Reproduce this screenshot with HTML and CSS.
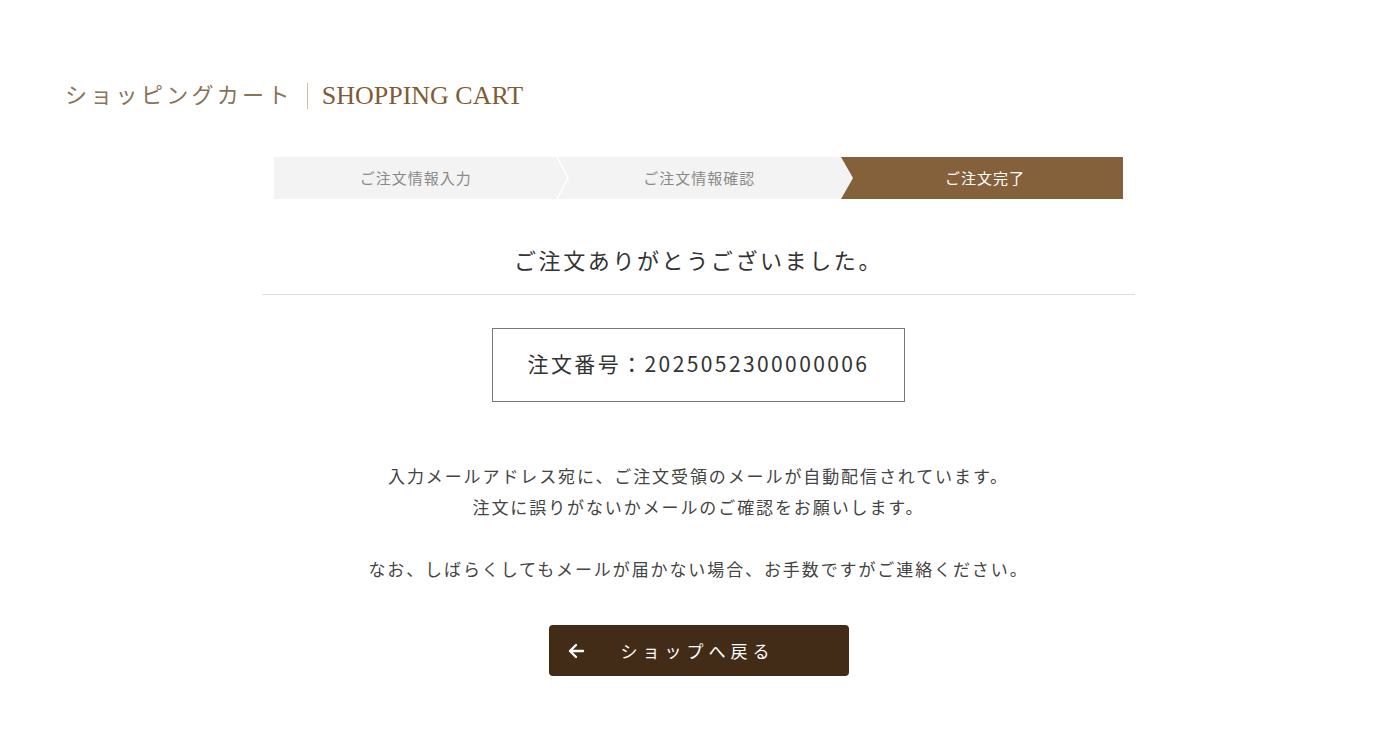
FILE: index.html
```html
<!DOCTYPE html>
<html lang="ja">
<head>
    <meta charset="utf-8">
    <meta name="viewport" content="width=device-width, initial-scale=1">
    <title>ショッピングカート | SHOPPING CART</title>
    <link rel="stylesheet" href="styles.css">
</head>
<body>
    <header class="page-head">
        <h1 class="page-title">
            <span class="title-ja">ショッピングカート</span>
            <span class="title-sep"></span>
            <span class="title-en">SHOPPING CART</span>
        </h1>
    </header>

    <main class="cart">
        <ol class="steps">
            <li class="step">
                ご注文情報入力
                <svg class="step-sep" width="14" height="42" viewBox="0 0 14 42">
                    <polyline points="1,0 12,21 1,42" fill="none" stroke="#fff" stroke-width="1.5"/>
                </svg>
            </li>
            <li class="step">ご注文情報確認</li>
            <li class="step current">ご注文完了</li>
        </ol>

        <h2 class="thanks">ご注文ありがとうございました。</h2>

        <div class="order-no">注文番号：2025052300000006</div>

        <p class="notice">
            入力メールアドレス宛に、ご注文受領のメールが自動配信されています。<br>
            注文に誤りがないかメールのご確認をお願いします。<br>
            <br>
            なお、しばらくしてもメールが届かない場合、お手数ですがご連絡ください。
        </p>

        <a class="back-btn" href="#">
            <svg class="back-icon" width="18" height="16" viewBox="0 0 18 16">
                <path d="M16 8H3M9 2L3 8l6 6" fill="none" stroke="#fff" stroke-width="2.4" stroke-linecap="round" stroke-linejoin="round"/>
            </svg>
            <span>ショップへ戻る</span>
        </a>
    </main>
</body>
</html>
```

FILE: styles.css
```css
body {
    margin: 0;
    background: #fff;
    color: #333;
    font-family: "Noto Sans CJK JP", "Noto Sans", sans-serif;
}
.page-head {
    padding: 80px 65px 0;
}
.page-title {
    margin: 0;
    display: flex;
    align-items: center;
    font-family: "Liberation Serif", "Noto Sans CJK JP", serif;
    font-weight: normal;
    font-size: 24px;
    line-height: 31px;
}
.title-ja {
    color: #8a7358;
    letter-spacing: 3.3px;
    font-size: 22px;
}
.title-sep {
    display: inline-block;
    width: 1px;
    height: 26px;
    background: #cdbda7;
    margin: 0 14px 0 14px;
}
.title-en {
    color: #7f5c35;
    font-size: 26px;
}

.cart {
    width: 873px;
    margin-left: calc(50% - 438px);
    text-align: center;
}
.steps {
    display: flex;
    margin: 46px 12px 0;
    padding: 0;
    list-style: none;
    background: #f3f3f3;
}
.step {
    position: relative;
    flex: 1;
    height: 42px;
    line-height: 42px;
    font-size: 15px;
    letter-spacing: 1px;
    color: #8a8a8a;
}
.step-sep {
    position: absolute;
    top: 0;
    right: -12px;
}
.step.current {
    flex: 0 0 282px;
    background: #84613a;
    color: #fff;
    clip-path: polygon(0 0, 100% 0, 100% 100%, 0 100%, 12px 50%);
    padding-left: 6px;
    box-sizing: border-box;
}

.thanks {
    margin: 42px 0 0;
    padding-bottom: 17px;
    border-bottom: 1px solid #ddd;
    font-size: 22px;
    font-weight: normal;
    line-height: 36px;
    letter-spacing: 2.6px;
    color: #333;
}
.order-no {
    width: 411px;
    height: 72px;
    margin: 33px auto 0;
    border: 1px solid #777;
    font-size: 21px;
    line-height: 68px;
    letter-spacing: 2.4px;
    color: #333;
}
.notice {
    margin: 58px 0 0;
    font-size: 17px;
    line-height: 31px;
    letter-spacing: 1.9px;
    color: #444;
}
.back-btn {
    display: flex;
    align-items: center;
    width: 300px;
    height: 51px;
    margin: 41px auto 60px;
    padding: 0 18px;
    box-sizing: border-box;
    border-radius: 4px;
    background: #432c17;
    color: #fff;
    text-decoration: none;
    font-size: 17px;
    letter-spacing: 5px;
}
.back-icon {
    margin-right: 36px;
}
```
